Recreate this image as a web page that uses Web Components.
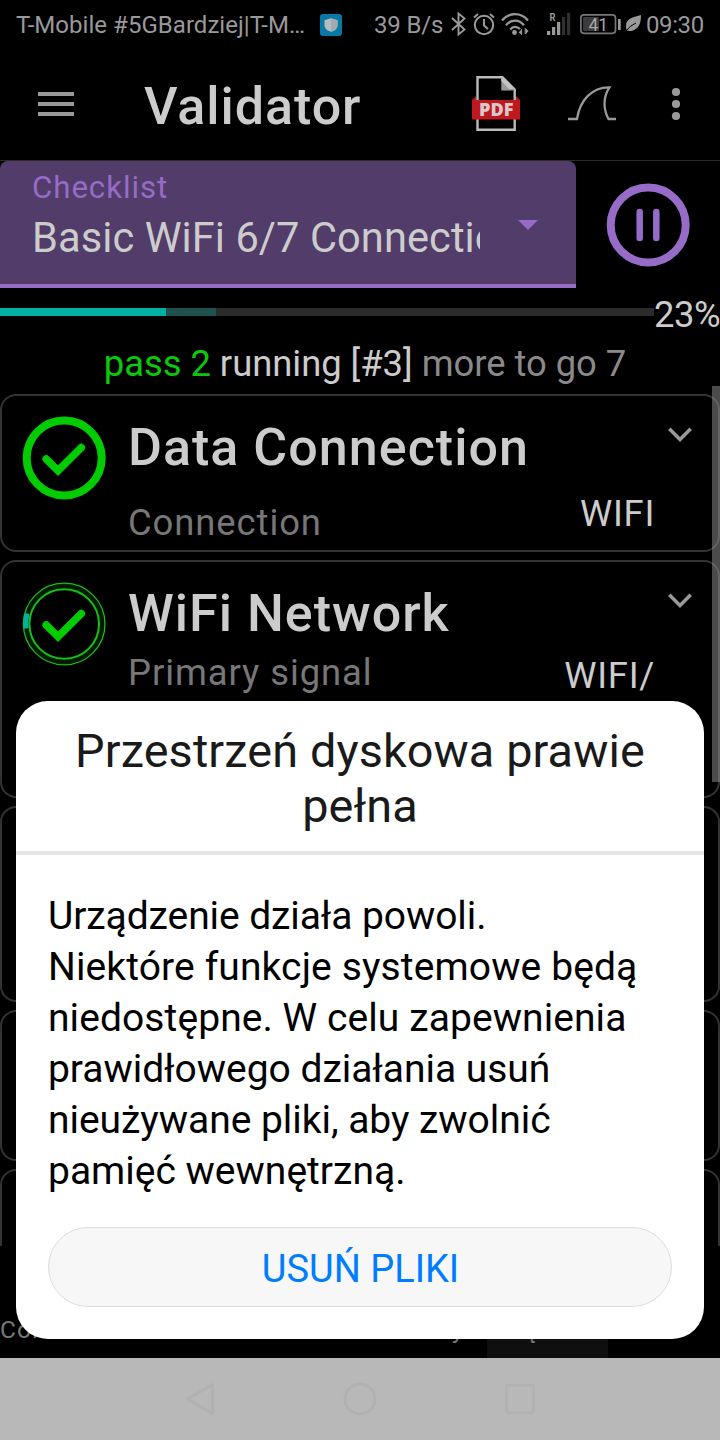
<!DOCTYPE html>
<html lang="pl">
<head>
<meta charset="utf-8">
<title>Validator</title>
<style>
html,body{margin:0;background:#000}
body{width:720px;height:1440px;overflow:hidden;font-family:Roboto,"Noto Sans",sans-serif}
</style>
</head>
<body>
<validator-app></validator-app>
<script>
function define(name, html) {
  const tpl = document.createElement('template');
  tpl.innerHTML = html;
  customElements.define(name, class extends HTMLElement {
    constructor() {
      super();
      this.attachShadow({mode: 'open'}).appendChild(tpl.content.cloneNode(true));
    }
  });
}

define('status-bar', `
<style>
:host{display:flex;height:48px;box-sizing:border-box;padding-left:16px;color:#999;font-size:24px;line-height:50px;white-space:nowrap}
.carrier{width:304px;letter-spacing:.04px}
.app{width:54px;height:48px}
.rate{width:72px;letter-spacing:-.15px}
.time{letter-spacing:-.4px}
.icons{width:200px;height:48px}
svg{display:block}
</style>
<span class="carrier">T-Mobile #5GBardziej|T-M…</span>
<svg class="app" viewBox="320 0 54 48"><rect x="320" y="14" width="22" height="22" rx="3" fill="#0879a5"/><path d="M331 18.3l6.500 2v5c0 3.500-3 5.500-6.500 6.500c-3.500-1-6.500-3-6.500-6.500v-5z" fill="#b5bdc1"/><path d="M331 18.300l6.500 2v5c0 3.500-3 5.500-6.500 6.500z" fill="#a3abb0"/></svg>
<span class="rate">39 B/s</span>
<svg class="icons" viewBox="446 0 200 48" fill="none" stroke="#999">
<path d="M452 18l12.500 11.500l-6 5V13.500l6 5L452 30" stroke-width="1.900"/>
<circle cx="484" cy="25" r="9.200" stroke-width="2"/><path d="M484 19v6.500l4 3.500M474 17.500l4-3.500M494 17.500l-4-3.500" stroke-width="2"/>
<path d="M502 20.500C509 12 521 12 528 20.500M506 25.300C511 19 519 19 524 25.300M510.300 29.500C513 26 517 26 520 29" stroke-width="2.200"/>
<circle cx="514.500" cy="32.500" r="2.400" fill="#999" stroke="none"/>
<path d="M518.500 32.500l3-3v5zM528.500 31l-3-3v6.500z" fill="#999" stroke="none"/><path d="M521.600 29v6M525.200 28v6" stroke-width="1"/>
<g stroke="none"><rect x="547" y="31" width="3.200" height="4" fill="#999"/><rect x="552" y="27" width="3.200" height="8" fill="#999"/><rect x="557" y="22" width="3.200" height="13" fill="#999"/><rect x="562" y="17" width="3.200" height="18" fill="#303030"/><rect x="567" y="13" width="3.200" height="22" fill="#303030"/></g>
<text x="549.500" y="21" font-size="10.500" font-weight="700" fill="#999" stroke="none" textLength="6" lengthAdjust="spacingAndGlyphs">R</text>
<rect x="580.900" y="14.900" width="34.600" height="18.400" rx="3" stroke-width="1.700" stroke="#777"/><rect x="583" y="17" width="16" height="14" rx="1" fill="#3b3b3b" stroke="none"/><rect x="618" y="19" width="2.700" height="11" fill="#999" stroke="none"/>
<text x="588.500" y="30.500" font-size="18.500" fill="#aaa" stroke="none" textLength="19.500" lengthAdjust="spacingAndGlyphs">41</text>
<path d="M641 15c-7 2-15 3-15 11c0 2 .2 3 1 4.500c2 .8 5 .8 8-1c5-3 6-8 6-14.500z" fill="#999" stroke="none"/><path d="M626.500 30.500c3-4 5-5 9.500-7.500" stroke="#000" stroke-width="1"/>
</svg>
<span class="time">09:30</span>`);

define('app-toolbar', `
<style>
:host{display:flex;height:112px;border-bottom:1px solid #2b2b2b;color:#ccc}
svg{display:block}
.menu{width:144px}
h1{margin:0;width:316px;font-size:52px;font-weight:500;line-height:118px;height:112px;white-space:nowrap;letter-spacing:.95px}
</style>
<svg class="menu" height="112" viewBox="0 48 144 112"><path d="M38 94h36M38 104h36M38 114h36" stroke="#999" stroke-width="4"/></svg>
<h1><slot></slot></h1>
<svg width="260" height="112" viewBox="460 48 260 112" fill="none">
<path d="M477.500 77.200H502.500L514.700 89.500V129.700H477.500Z" stroke="#bbb" stroke-width="2.400"/><path d="M501.300 77v13.500h13.500z" fill="#999"/><path d="M501.300 77v4l8 8h5.500z" fill="#c4c4c4"/>
<path d="M472 100l4-4v4h40v-4l4 4v19.500h-48z" fill="#bd191e"/>
<text x="479" y="116" font-family="Open Sans" font-weight="800" font-size="17.500" fill="#dcc8cb" textLength="34.500" lengthAdjust="spacingAndGlyphs">PDF</text>
<path d="M568 119H577C580 100 592 87 609.500 87.300C603 97 603 109 608.500 119H616" stroke="#999" stroke-width="2.300"/>
<g fill="#999"><circle cx="676" cy="92" r="4.100"/><circle cx="676" cy="104" r="4.100"/><circle cx="676" cy="116" r="4.100"/></g>
</svg>`);

define('checklist-select', `
<style>
:host{display:flex;box-sizing:border-box;width:576px;height:127px;background:#523c69;border-bottom:4px solid #966cc8;border-radius:8px 8px 0 0;padding:8px 0 0 32px}
.label{font-size:31.2px;line-height:37px;color:#966cc8;letter-spacing:.95px}
.value{width:448px;overflow:hidden;white-space:nowrap;font-size:41.6px;line-height:50px;margin-top:7px;color:#ccc;letter-spacing:.07px}
svg{display:block;margin:51px 0 0 38px}
</style>
<div><div class="label">Checklist</div><div class="value"><slot></slot></div></div>
<svg width="20" height="10"><path d="M0 0h20L10 10z" fill="#966cc8"/></svg>`);

define('pause-button', `
<style>:host{display:block;width:144px;height:127px}svg{display:block}</style>
<svg width="144" height="127" viewBox="576 161 144 127" fill="none" stroke="#966cc8"><circle cx="648.200" cy="225" r="37.500" stroke-width="8"/><path d="M639.700 212v26M656.300 212v26" stroke-width="6.500" stroke-linecap="round"/></svg>`);

define('test-progress', `
<style>
:host{display:block;height:98px;color:#ccc;font-size:36.4px;white-space:nowrap}
.row{display:flex;height:48px;align-items:flex-start}
.track{display:flex;flex:none;width:654px;height:8px;margin-top:20px;background:#2b2b2b}
.done{width:166px;background:#00b0a0}.next{width:50px;background:#1f524e}
.pct{line-height:43px;margin-top:5px;letter-spacing:-.4px}
.sum{text-align:center;line-height:43px;margin-top:6px;padding-left:10px;letter-spacing:-.03px}
.ok{color:#0ac80a}.more{color:#8a8a8a}
</style>
<div class="row"><div class="track"><i class="done"></i><i class="next"></i></div><span class="pct">23%</span></div>
<div class="sum"><span class="ok">pass 2</span> running [#3] <span class="more">more to go 7</span></div>`);

define('done-icon', `
<style>
:host{display:block;width:84px;height:84px}svg{display:block}
.busy{display:none}:host([busy]) .busy{display:block}:host([busy]) .full{display:none}
</style>
<svg width="84" height="84" viewBox="22 416 84 84" fill="none">
<circle class="full" cx="64.200" cy="458" r="37.500" stroke="#00cc00" stroke-width="8"/>
<g class="busy"><circle cx="64.200" cy="458" r="38" stroke="#001a00" stroke-width="6"/><circle cx="64.200" cy="458" r="40.800" stroke="#20b820" stroke-width="1.300"/><circle cx="64.200" cy="458" r="34.800" stroke="#10c410" stroke-width="2"/><path d="M26.200 462.500A38 38 0 0 1 27 447.500" stroke="#00b0a0" stroke-width="5"/></g>
<path d="M46.200 459L58 470.600L81.300 447.600" stroke="#00cc00" stroke-width="7.600" stroke-linecap="round"/>
</svg>`);

define('test-card', `
<style>
:host{display:flex;box-sizing:border-box;border:2px solid #333;border-radius:16px;padding:20px 0 0 20px;flex:none;font-size:36.4px;line-height:43px;color:#ccc;white-space:nowrap}
.text{width:360px;margin-left:22px;padding-top:1px}
.title{font-size:52px;font-weight:500;line-height:61px;letter-spacing:1.02px}
.sub{color:#777;margin-top:var(--gap);letter-spacing:.93px}
.value{width:167px;text-align:right;padding-top:var(--value-top);letter-spacing:.7px}
svg{display:block;margin:9px 0 0 11px}
</style>
<slot name="icon"></slot>
<div class="text"><div class="title"><slot name="title"></slot></div><div class="sub"><slot name="sub"></slot></div></div>
<div class="value"><slot name="value"></slot></div>
<svg width="28" height="18" viewBox="666 425 28 18"><path d="M669.300 428.800L680 439.500L690.700 428.800" fill="none" stroke="#999" stroke-width="3.500"/></svg>`);

define('test-list', `
<style>
:host{display:flex;position:relative;box-sizing:border-box;height:860px;flex-direction:column;gap:8px;padding-top:8px;overflow:hidden}
.bar{position:absolute;right:0;top:0;width:8px;height:396px;background:rgba(150,150,150,.5)}
.blank{box-sizing:border-box;flex:none;border:2px solid #333;border-radius:16px}
</style>
<slot></slot>
<div class="blank" style="height:196px"></div><div class="blank" style="height:151px"></div><div class="blank" style="height:160px"></div>
<div class="bar"></div>`);

define('tab-strip', `
<style>
:host{display:flex;height:112px;box-sizing:border-box;padding-top:54px;font-size:24.500px;color:#777;letter-spacing:1px}
span{display:block;line-height:60px}
.a{width:452px}.b{width:35px}.c{width:83px;padding-left:38px;background:#0f0f0f}
</style>
<span class="a">Con</span><span class="b">y</span><span class="c">ę</span>`);

define('nav-bar', `
<style>:host{display:block;height:82px;background:#b8b8b8}svg{display:block}</style>
<svg width="720" height="82" viewBox="0 1358 720 82" fill="none" stroke="#b1b1b1" stroke-width="2.800" stroke-linejoin="round"><path d="M187.500 1399L212.500 1384.500V1413.500Z"/><circle cx="360" cy="1399" r="15"/><rect x="506.400" y="1385.400" width="27.200" height="27.200" rx="1"/></svg>`);

define('alert-dialog', `
<style>
:host{display:block;position:absolute;left:16px;top:701px;width:688px;height:638px;border-radius:32px;background:#fff;overflow:hidden;box-sizing:border-box;color:#000}
h2{margin:0;height:150px;box-sizing:border-box;padding:23px 32px 0;text-align:center;font-weight:400;font-size:46.8px;line-height:55px;color:#1a1a1a;letter-spacing:.12px}
hr{margin:0;border:0;height:4px;background:#e5e5e5}
.body{margin:36px 32px 30px;font-size:39px;line-height:51px;white-space:nowrap}
button{display:block;margin:0 32px;width:624px;height:80px;padding:4px 0 0 1px;border:1px solid #ddd;border-radius:40px;background:#f7f7f7;color:#007dff;font:400 38px Roboto,sans-serif}
</style>
<h2><slot name="title"></slot></h2><hr>
<div class="body"><slot></slot></div>
<button><slot name="action"></slot></button>`);

define('text-line', `
<style>:host{display:block;letter-spacing:var(--track,0)}</style><slot></slot>`);

define('validator-app', `
<style>
:host{display:flex;flex-direction:column;position:relative;width:720px;height:1440px;background:#000;overflow:hidden}
.top{display:flex}
</style>
<status-bar></status-bar>
<app-toolbar>Validator</app-toolbar>
<div class="top"><checklist-select>Basic WiFi 6/7 Connection</checklist-select><pause-button></pause-button></div>
<test-progress></test-progress>
<test-list>
<test-card style="height:158px;--gap:23px;--value-top:76px"><done-icon slot="icon"></done-icon><span slot="title">Data Connection</span><span slot="sub">Connection</span><span slot="value">WIFI</span></test-card>
<test-card style="height:238px;--gap:7px;--value-top:72px"><done-icon slot="icon" busy></done-icon><span slot="title">WiFi Network</span><span slot="sub">Primary signal</span><span slot="value">WIFI/</span></test-card>
</test-list>
<tab-strip></tab-strip>
<nav-bar></nav-bar>
<alert-dialog><span slot="title">Przestrzeń dyskowa prawie pełna</span><text-line style="--track:-.09px">Urządzenie działa powoli.</text-line><text-line style="--track:.12px">Niektóre funkcje systemowe będą</text-line><text-line style="--track:.08px">niedostępne. W celu zapewnienia</text-line><text-line style="--track:-.04px">prawidłowego działania usuń</text-line><text-line style="--track:-.04px">nieużywane pliki, aby zwolnić</text-line><text-line>pamięć wewnętrzną.</text-line><span slot="action">USUŃ PLIKI</span></alert-dialog>`);
</script>
</body>
</html>
